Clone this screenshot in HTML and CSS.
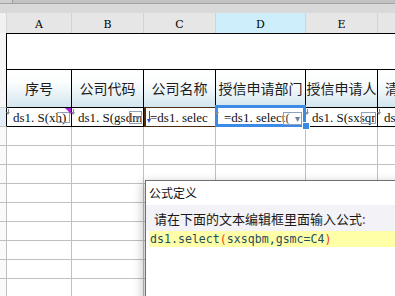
FILE: index.html
```html
<!DOCTYPE html>
<html>
<head>
<meta charset="utf-8">
<link rel="stylesheet" href="styles.css">
</head>
<body>
<div class="app">
  <div class="topbar"><div class="tb-left"></div></div>
  <div class="strip"></div>
  <div class="sheet">
    <div class="ch rh"></div>
    <div class="ch">A</div>
    <div class="ch">B</div>
    <div class="ch">C</div>
    <div class="ch csel">D</div>
    <div class="ch">E</div>
    <div class="ch">F</div>

    <div class="rh rt"></div>
    <div class="title"></div>

    <div class="rh rhh"></div>
    <div class="hd">序号</div>
    <div class="hd">公司代码</div>
    <div class="hd">公司名称</div>
    <div class="hd">授信申请部门</div>
    <div class="hd">授信申请人</div>
    <div class="hd hd-left">清</div>

    <div class="rh rsel"></div>
    <div class="dc"><span class="arr"></span><span class="tx">ds1. S(xh)</span><span class="box bx-a"></span><span class="tri"></span></div>
    <div class="dc"><span class="arr"></span><span class="tx">ds1. S(gsdm)</span><span class="box bx-b"><span class="dd">▾</span></span></div>
    <div class="dc dc-c"><span class="barr"></span><span class="tx">=ds1. selec</span></div>
    <div class="dc dc-d"><span class="arr"></span><span class="tx">=ds1. select(</span><span class="box bx-d"><span class="dd">▾</span></span><span class="handle"></span></div>
    <div class="dc"><span class="arr"></span><span class="tx">ds1. S(sxsqr</span><span class="box bx-e"></span></div>
    <div class="dc"><span class="arr"></span><span class="tx">ds1. S</span></div>

    <div class="rh g"></div><div class="gc"></div><div class="gc"></div><div class="gc"></div><div class="gc"></div><div class="gc"></div><div class="gc"></div>
    <div class="rh g"></div><div class="gc"></div><div class="gc"></div><div class="gc"></div><div class="gc"></div><div class="gc"></div><div class="gc"></div>
    <div class="rh g"></div><div class="gc"></div><div class="gc"></div><div class="gc"></div><div class="gc"></div><div class="gc"></div><div class="gc"></div>
    <div class="rh g"></div><div class="gc"></div><div class="gc"></div><div class="gc"></div><div class="gc"></div><div class="gc"></div><div class="gc"></div>
    <div class="rh g"></div><div class="gc"></div><div class="gc"></div><div class="gc"></div><div class="gc"></div><div class="gc"></div><div class="gc"></div>
    <div class="rh g"></div><div class="gc"></div><div class="gc"></div><div class="gc"></div><div class="gc"></div><div class="gc"></div><div class="gc"></div>
    <div class="rh g"></div><div class="gc"></div><div class="gc"></div><div class="gc"></div><div class="gc"></div><div class="gc"></div><div class="gc"></div>
    <div class="rh g"></div><div class="gc"></div><div class="gc"></div><div class="gc"></div><div class="gc"></div><div class="gc"></div><div class="gc"></div>
    <div class="rh g"></div><div class="gc"></div><div class="gc"></div><div class="gc"></div><div class="gc"></div><div class="gc"></div><div class="gc"></div>
  </div>

  <div class="dialog">
    <div class="dlg-title">公式定义</div>
    <div class="dlg-label">请在下面的文本编辑框里面输入公式<span class="colon">:</span></div>
    <div class="editor">
      <div class="line"><span class="fn">ds1.select</span><span class="par">(</span><span class="fn">sxsqbm,gsmc=C4</span><span class="par">)</span></div>
    </div>
  </div>
</div>
</body>
</html>
```
FILE: styles.css
```css
html, body {
  margin: 0;
  padding: 0;
  background: #fff;
}
.app {
  position: relative;
  width: 395px;
  height: 296px;
  overflow: hidden;
  font-family: "Liberation Serif", serif;
}
.topbar {
  height: 3px;
  background: #c2c2c2;
  border-bottom: 1px solid #a3a3a3;
  display: flex;
}
.tb-left {
  width: 12px;
  background: #cfcfcf;
  border-right: 1px solid #9c9c9c;
}
.strip {
  height: 9px;
  background: #d9d9d9;
}
.sheet {
  display: grid;
  grid-template-columns: 7px 65px 72px 72px 90px 72px 80px;
  grid-template-rows: 20px 37px 38px 19px repeat(9, 19px);
}
.sheet > div {
  box-sizing: border-box;
}
.ch {
  background: #e6e6e6;
  border-right: 1px solid #d3d3d3;
  font-family: "DejaVu Serif", serif;
  font-size: 11px;
  color: #000;
  display: flex;
  align-items: center;
  justify-content: center;
  padding-top: 3px;
}
.ch.rh {
  background: #f1f1f4;
  border-right: 1px solid #d6d6d6;
}
.ch.csel {
  background: #cdeefa;
}
.rh {
  background: #f6f6f6;
}
.rt {
  border-right: 1px solid #000;
}
.title {
  grid-column: 2 / -1;
  border-top: 1px solid #000;
  border-bottom: 1px solid #000;
}
.rhh {
  border-right: 1px solid #000;
  border-bottom: 1px solid #d0d0d0;
}
.hd {
  background: linear-gradient(#ffffff 0%, #fbfdfe 35%, #d2e5ee 100%);
  border-right: 1px solid #000;
  border-bottom: 1px solid #000;
  font-family: "Noto Sans CJK SC", sans-serif;
  font-size: 14px;
  color: #1c1c1c;
  display: flex;
  align-items: center;
  justify-content: center;
  white-space: nowrap;
  padding-bottom: 1px;
}
.hd-left {
  justify-content: flex-start;
  padding-left: 7px;
}
.rsel {
  background: #e2eef8;
  border-right: 1px solid #000;
  border-bottom: 1px solid #c8c8c8;
}
.dc {
  position: relative;
  border-right: 1px solid #000;
  border-bottom: 1px solid #000;
  font-size: 13px;
  color: #111;
  white-space: nowrap;
  overflow: visible;
  display: flex;
  align-items: center;
  padding-left: 6px;
  padding-top: 1px;
}
.dc .tx {
  overflow: hidden;
  display: block;
  max-width: 100%;
}
.arr {
  position: absolute;
  left: 1px;
  top: 1px;
  width: 1px;
  height: 4px;
  background: #8a8a8a;
}
.arr::after {
  content: "";
  position: absolute;
  left: -2px;
  top: 3px;
  border-left: 2.5px solid transparent;
  border-right: 2.5px solid transparent;
  border-top: 3px solid #8a8a8a;
}
.barr {
  position: absolute;
  left: 3px;
  top: 3px;
  width: 1px;
  height: 9px;
  background: #1d4fd8;
}
.barr::after {
  content: "";
  position: absolute;
  left: -2px;
  top: 8px;
  border-left: 2.5px solid transparent;
  border-right: 2.5px solid transparent;
  border-top: 4px solid #1d4fd8;
}
.tri {
  position: absolute;
  right: 0;
  top: 0;
  width: 0;
  height: 0;
  border-top: 6px solid #b020e0;
  border-left: 6px solid transparent;
}
.box {
  position: absolute;
  border: 1px solid #8fa0bc;
  box-sizing: border-box;
  display: flex;
  align-items: center;
  justify-content: center;
}
.dd {
  font-family: "DejaVu Sans", sans-serif;
  font-size: 10px;
  color: #6d7f9c;
  line-height: 1;
}
.bx-a {
  right: 1px;
  top: 4px;
  width: 13px;
  height: 11px;
}
.bx-b {
  right: 1px;
  top: 3px;
  width: 13px;
  height: 13px;
  justify-content: flex-end;
  padding-right: 1px;
}
.bx-d {
  right: 3px;
  top: 4px;
  width: 19px;
  height: 13px;
  justify-content: flex-end;
  padding-right: 1px;
  background: rgba(255,255,255,0.2);
}
.bx-e {
  right: 1px;
  top: 4px;
  width: 15px;
  height: 12px;
}
.dc-c {
  border: 1px solid #4c2c12;
  border-left: 2px solid #4c2c12;
  border-right: 1px solid #000;
  padding-left: 4px;
  margin-top: -1px;
  height: 20px;
}
.dc-d {
  padding-left: 8px;
}
.dc-d::before {
  content: "";
  position: absolute;
  left: -1px;
  top: -3px;
  right: -1px;
  bottom: -1px;
  border: 3px solid #3a8ae6;
  pointer-events: none;
}
.handle {
  position: absolute;
  right: -5px;
  bottom: -4px;
  width: 6px;
  height: 6px;
  background: #3a8ae6;
  border: 1px solid #fff;
  z-index: 2;
}
.g {
  background: #fafafa;
  border-right: 1px solid #c0c0c0;
  border-bottom: 1px solid #c0c0c0;
}
.gc {
  border-right: 1px solid #c0c0c0;
  border-bottom: 1px solid #c0c0c0;
}
.dialog {
  position: absolute;
  left: 145px;
  top: 180px;
  width: 262px;
  height: 130px;
  box-sizing: border-box;
  border: 1px solid #6f6f6f;
  background: #fff;
  box-shadow: -3px 2px 9px rgba(0,0,0,0.22);
  font-family: "Noto Sans CJK SC", sans-serif;
}
.dlg-title {
  height: 24px;
  line-height: 23px;
  padding-left: 3px;
  font-size: 12px;
  color: #111;
  background: #fff;
}
.dlg-label {
  height: 26px;
  line-height: 27px;
  padding-left: 8px;
  font-size: 13px;
  color: #1a1a1a;
  background: #f3f3f7;
}
.colon {
  color: #7a2e8e;
}
.editor {
  margin-left: 3px;
  background: #fff;
  height: 80px;
}
.line {
  height: 16px;
  line-height: 16px;
  background: #ffffa8;
  padding-left: 1px;
  font-family: "DejaVu Sans Mono", monospace;
  font-size: 11.6px;
  white-space: nowrap;
}
.fn {
  color: #1f4e5e;
}
.par {
  color: #e8401c;
}
```
